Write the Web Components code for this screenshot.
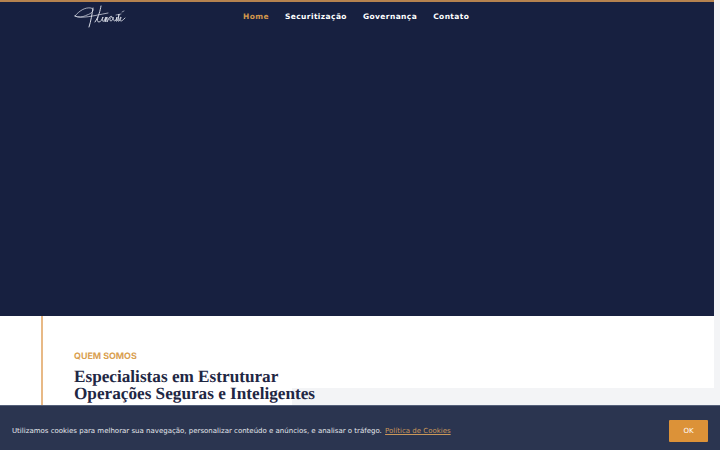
<!DOCTYPE html>
<html lang="pt-BR">
<head>
<meta charset="utf-8">
<title>Humaitá</title>
<style>
  html, body { margin: 0; height: 100%; overflow: hidden; background: #f3f4f6; text-rendering: geometricPrecision; }
</style>
</head>
<body>
<site-page>
  <site-header slot="hero"></site-header>
  <about-section slot="about" kicker="QUEM SOMOS">
    Especialistas em Estruturar<br>Operações Seguras e Inteligentes
  </about-section>
</site-page>
<cookie-bar></cookie-bar>

<script>
class SitePage extends HTMLElement {
  constructor() {
    super();
    this.attachShadow({ mode: 'open' });
    this.shadowRoot.innerHTML = `
      <style>
        :host { display: block; width: 714px; height: 450px; overflow: hidden; }
        .hero { display: block; height: 316px; box-sizing: border-box; background: #172040; border-top: 2px solid #b5824f; }
      </style>
      <div class="hero"><slot name="hero"></slot></div>
      <slot name="about"></slot>
    `;
  }
}

class SiteHeader extends HTMLElement {
  constructor() {
    super();
    this.attachShadow({ mode: 'open' });
    const links = ['Home', 'Securitização', 'Governança', 'Contato'];
    this.shadowRoot.innerHTML = `
      <style>
        :host { display: flex; align-items: center; height: 28px; padding-left: 74px; font: 700 7.5px "DejaVu Sans", sans-serif; letter-spacing: .4px; color: #fff; }
        svg { display: block; width: 52px; height: 28px; margin-right: 117px; flex: none; }
        nav { display: flex; gap: 16px; }
        a { color: inherit; text-decoration: none; white-space: nowrap; }
        a.active { color: #d3974c; }
      </style>
      <svg viewBox="0 0 52 28" fill="none" stroke="#dfe3ec" stroke-linecap="round" stroke-linejoin="round" role="img" aria-label="Humaitá">
        <path stroke-width=".7" d="M1 14C5 9 11 5 17 6 21 7 19 11 13 13 9 15 4 16 1 14"/>
        <path stroke-width=".7" d="M1 14C8 17 18 14 34 11"/>
        <path stroke-width=".95" d="M19 6C18 12 17 19 15 25"/>
        <path stroke-width=".95" d="M27 4C26 9 25 14 21 20"/>
        <path stroke-width=".85" d="M24 15C23 18 23 20 25 20 27 20 28 17 29 15 28 18 28 20 30 19L32 15 31 20 33 15 33 20 35 16C36 14 38 14 38 15 36 15 35 19 37 19 38 19 39 17 39 15 39 18 40 20 42 18L43 15 42 19C43 20 44 18 45 12L44 19C45 20 47 17 47 15 46 15 45 19 47 19 48 19 49 18 51 16"/>
        <path stroke-width=".6" d="M42 13 47 12M48 10 50 9"/>
      </svg>
      <nav>${links.map((l, i) => `<a href="#" class="${i === 0 ? 'active' : ''}">${l}</a>`).join('')}</nav>
    `;
  }
}

class AboutSection extends HTMLElement {
  constructor() {
    super();
    this.attachShadow({ mode: 'open' });
    this.shadowRoot.innerHTML = `
      <style>
        :host { display: block; height: 134px; background: linear-gradient(#fff 72px, #f3f4f6 72px) 292px 0 no-repeat, #fff; padding-left: 41px; }
        .rule { border-left: 2px solid #e8b986; height: 100%; padding: 35px 0 0 31px; box-sizing: border-box; }
        .kicker { font: 700 8.9px/12px Inter, sans-serif; color: #d9a050; margin-bottom: 5px; }
        h2 { margin: 0; font: 700 17.2px/17px "Liberation Serif", serif; color: #1f2744; white-space: nowrap; }
      </style>
      <div class="rule">
        <div class="kicker">${this.getAttribute('kicker')}</div>
        <h2><slot></slot></h2>
      </div>
    `;
  }
}

class CookieBar extends HTMLElement {
  constructor() {
    super();
    this.attachShadow({ mode: 'open' });
    this.shadowRoot.innerHTML = `
      <style>
        :host { position: fixed; left: 0; right: 0; bottom: 0; height: 45px; box-sizing: border-box; display: flex; align-items: center; justify-content: space-between; padding: 5px 12px 0 12px; background: #2b3550; border-top: 1px solid #54607a; font: 7px "DejaVu Sans", sans-serif; color: #e4e7ec; }
        a { color: #c9975a; margin-left: 1px; }
        button { width: 39px; height: 22px; padding: 0; border: 0; border-radius: 1px; background: #dc9238; color: #fff; font: inherit; }
      </style>
      <span>Utilizamos cookies para melhorar sua navegação, personalizar conteúdo e anúncios, e analisar o tráfego. <a href="#">Política de Cookies</a></span>
      <button>OK</button>
    `;
  }
}

customElements.define('site-page', SitePage);
customElements.define('site-header', SiteHeader);
customElements.define('about-section', AboutSection);
customElements.define('cookie-bar', CookieBar);
</script>
</body>
</html>
